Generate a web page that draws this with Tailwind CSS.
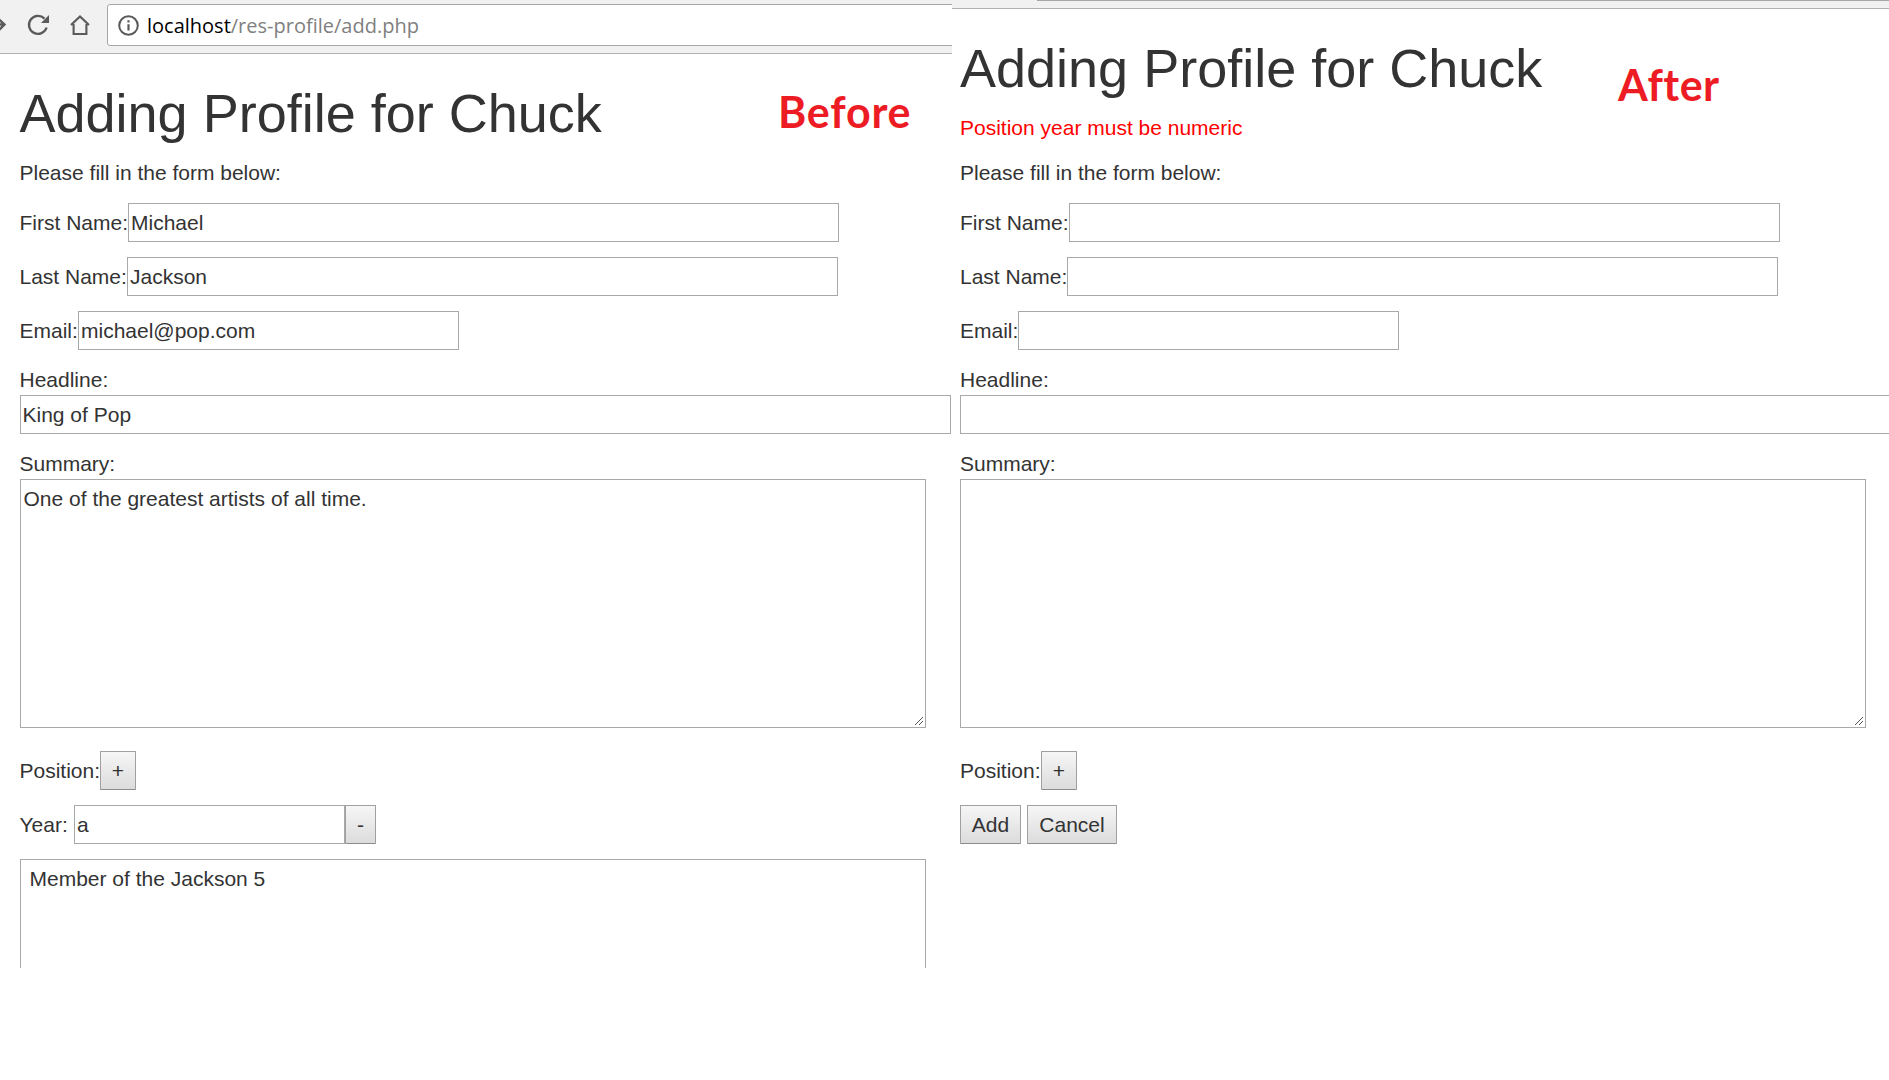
<!DOCTYPE html>
<html lang="en">
<head>
<meta charset="utf-8">
<title>Adding Profile</title>
<script src="https://cdn.jsdelivr.net/npm/@tailwindcss/browser@4"></script>
</head>
<body class="bg-white text-[#333] font-['Liberation_Sans',Arial,sans-serif] text-[21px] leading-[30px] w-[1889px] h-[1080px] overflow-hidden">
<main class="flex items-start">
  <section class="relative w-[952px] h-[968px] shrink-0 overflow-hidden">
    <header class="flex h-[54px] bg-[#f1f1f1] border-b border-[#b0b0b0] pt-[4px]">
      <svg class="w-[107px] h-[46px] shrink-0" viewBox="0 4 107 46" fill="none" stroke="#5a5a5a" stroke-width="2">
        <path d="M0 24.5H4M-1 19.5L4.5 24.5L-1 30" stroke-width="2.4"/>
        <path d="M44.5 18.6A9 9 0 1 0 46.6 27.5" stroke-width="2.3"/>
        <path d="M49 15V23H41Z" fill="#5a5a5a" stroke="none"/>
        <path d="M71 25L80 16.5L89 25M73.6 24V34H86.4V24" stroke-width="2.1"/>
      </svg>
      <div class="flex items-center w-[860px] h-[42px] shrink-0 rounded-[3px] border border-[#a6a6a6] bg-white pl-[10px]">
        <svg class="w-[21px] h-[21px] shrink-0" viewBox="0 0 21 21" fill="none"><circle cx="10.5" cy="10.5" r="9.3" stroke="#5a5a5a" stroke-width="2"/><path d="M9.4 5.2H11.6V7.4H9.4ZM9.4 9.2H11.6V15.6H9.4Z" fill="#5a5a5a"/></svg>
        <span class="ml-[8px] pt-[2px] whitespace-nowrap font-['Open_Sans',sans-serif] text-[20px] text-[#808080]"><span class="text-black">localhost</span>/res-profile/add.php</span>
      </div>
    </header>
    <div class="absolute left-[778px] top-[86px] font-['Lato',sans-serif] font-bold text-[43px] leading-[52px] tracking-[0.8px] text-[#ed1c24]">Before</div>
    <div class="pl-[19.5px] pt-[30px]">
      <h1 class="text-[54px] leading-[59px] mb-[15px] whitespace-nowrap">Adding Profile for Chuck</h1>
      <p class="mb-[15px]">Please fill in the form below:</p>
      <div class="flex items-center mb-[15px]"><label class="w-[108.5px] shrink-0 whitespace-nowrap">First Name:</label><input class="w-[711px] h-[39px] border border-[#a9a9a9] px-[2px]" value="Michael"></div>
      <div class="flex items-center mb-[15px]"><label class="w-[107.5px] shrink-0 whitespace-nowrap">Last Name:</label><input class="w-[711px] h-[39px] border border-[#a9a9a9] px-[2px]" value="Jackson"></div>
      <div class="flex items-center mb-[15px]"><label class="w-[58.5px] shrink-0 whitespace-nowrap">Email:</label><input class="w-[381px] h-[39px] border border-[#a9a9a9] px-[2px]" value="michael@pop.com"></div>
      <label class="block">Headline:</label>
      <input class="block w-[931px] h-[39px] border border-[#a9a9a9] px-[2px] mb-[15px]" value="King of Pop">
      <label class="block">Summary:</label>
      <div class="relative w-[906px] h-[249px] mb-[23px]">
        <textarea class="block w-full h-full resize-none border border-[#a9a9a9] px-[3px] py-[4px]">One of the greatest artists of all time.</textarea>
        <svg class="absolute right-[2.5px] bottom-[3px] w-[8px] h-[8px]" viewBox="0 0 8 8" stroke="#555" stroke-width="1"><path d="M0 8L8 0M4 8L8 4"/></svg>
      </div>
      <div class="flex items-center mb-[15px]"><label class="w-[80.5px] shrink-0 whitespace-nowrap">Position:</label><button class="w-[36px] h-[39px] rounded-[1px] border border-[#a0a0a0] border-b-[#8c8c8c] bg-linear-to-b from-[#f6f6f6] to-[#dcdcdc]">+</button></div>
      <div class="flex items-center mb-[15px]"><label class="w-[54.5px] shrink-0 whitespace-nowrap">Year:</label><input class="w-[271px] h-[39px] border border-[#a9a9a9] px-[2px]" value="a"><button class="w-[31px] h-[39px] rounded-[1px] border border-[#a0a0a0] border-b-[#8c8c8c] bg-linear-to-b from-[#f6f6f6] to-[#dcdcdc]">-</button></div>
      <textarea class="block w-[906px] h-[249px] resize-none border border-[#a9a9a9] pl-[9px] py-[4px]">Member of the Jackson 5</textarea>
    </div>
  </section>
  <section class="relative w-[937px] h-[968px] shrink-0 overflow-hidden">
    <header class="h-[9px] bg-[#f1f1f1] border-b border-[#b0b0b0] pl-[85px]"><div class="h-px bg-[#a6a6a6]"></div></header>
    <div class="absolute left-[666px] top-[59px] font-['Lato',sans-serif] font-bold text-[43px] leading-[52px] tracking-[0.5px] text-[#ed1c24]">After</div>
    <div class="pl-[8px] pt-[30px]">
      <h1 class="text-[54px] leading-[59px] mb-[15px] whitespace-nowrap">Adding Profile for Chuck</h1>
      <p class="mb-[15px] text-[#f00]">Position year must be numeric</p>
      <p class="mb-[15px]">Please fill in the form below:</p>
      <div class="flex items-center mb-[15px]"><label class="w-[109px] shrink-0 whitespace-nowrap">First Name:</label><input class="w-[711px] h-[39px] border border-[#a9a9a9] px-[2px]"></div>
      <div class="flex items-center mb-[15px]"><label class="w-[107px] shrink-0 whitespace-nowrap">Last Name:</label><input class="w-[711px] h-[39px] border border-[#a9a9a9] px-[2px]"></div>
      <div class="flex items-center mb-[15px]"><label class="w-[58px] shrink-0 whitespace-nowrap">Email:</label><input class="w-[381px] h-[39px] border border-[#a9a9a9] px-[2px]"></div>
      <label class="block">Headline:</label>
      <input class="block w-[931px] h-[39px] border border-[#a9a9a9] px-[2px] mb-[15px]">
      <label class="block">Summary:</label>
      <div class="relative w-[906px] h-[249px] mb-[23px]">
        <textarea class="block w-full h-full resize-none border border-[#a9a9a9] px-[4px] py-[4px]"></textarea>
        <svg class="absolute right-[3px] bottom-[3px] w-[8px] h-[8px]" viewBox="0 0 8 8" stroke="#555" stroke-width="1"><path d="M0 8L8 0M4 8L8 4"/></svg>
      </div>
      <div class="flex items-center mb-[15px]"><label class="w-[81px] shrink-0 whitespace-nowrap">Position:</label><button class="w-[36px] h-[39px] rounded-[1px] border border-[#a0a0a0] border-b-[#8c8c8c] bg-linear-to-b from-[#f6f6f6] to-[#dcdcdc]">+</button></div>
      <div class="flex gap-[6px]"><button class="w-[61px] h-[39px] rounded-[1px] border border-[#a0a0a0] border-b-[#8c8c8c] bg-linear-to-b from-[#f6f6f6] to-[#dcdcdc]">Add</button><button class="w-[90px] h-[39px] rounded-[1px] border border-[#a0a0a0] border-b-[#8c8c8c] bg-linear-to-b from-[#f6f6f6] to-[#dcdcdc]">Cancel</button></div>
    </div>
  </section>
</main>
</body>
</html>
